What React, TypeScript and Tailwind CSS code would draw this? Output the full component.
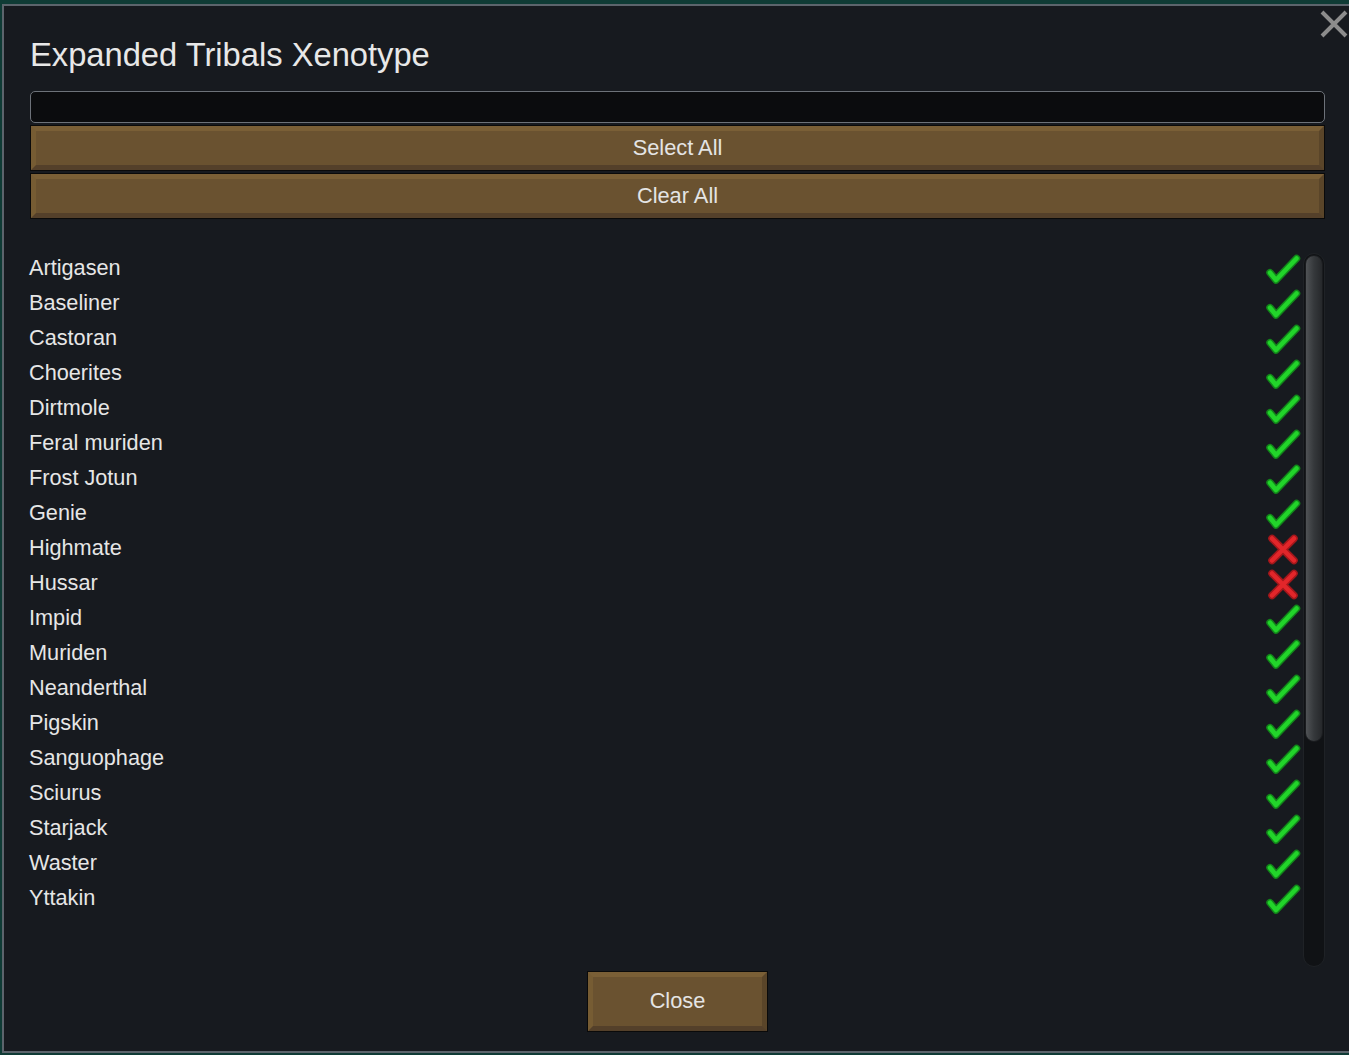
import React from "react";

type Xeno = { name: string; allowed: boolean };

const xenotypes: Xeno[] = [
  { name: "Artigasen", allowed: true },
  { name: "Baseliner", allowed: true },
  { name: "Castoran", allowed: true },
  { name: "Choerites", allowed: true },
  { name: "Dirtmole", allowed: true },
  { name: "Feral muriden", allowed: true },
  { name: "Frost Jotun", allowed: true },
  { name: "Genie", allowed: true },
  { name: "Highmate", allowed: false },
  { name: "Hussar", allowed: false },
  { name: "Impid", allowed: true },
  { name: "Muriden", allowed: true },
  { name: "Neanderthal", allowed: true },
  { name: "Pigskin", allowed: true },
  { name: "Sanguophage", allowed: true },
  { name: "Sciurus", allowed: true },
  { name: "Starjack", allowed: true },
  { name: "Waster", allowed: true },
  { name: "Yttakin", allowed: true },
];

const CheckIcon = () => (
  <svg width="36" height="32" viewBox="0 0 36 32">
    <path
      d="M5 19.7 L11 27 L31.5 5.5"
      fill="none"
      stroke="#12861a"
      strokeWidth="7.5"
      strokeLinecap="round"
      strokeLinejoin="round"
    />
    <path
      d="M5 19.7 L11 27 L31.5 5.5"
      fill="none"
      stroke="#22d42a"
      strokeWidth="4.5"
      strokeLinecap="round"
      strokeLinejoin="round"
    />
  </svg>
);

const CrossIcon = () => (
  <svg width="36" height="32" viewBox="0 0 36 32">
    <path
      d="M7 5.5 L29 27.5 M29 5.5 L7 27.5"
      fill="none"
      stroke="#a3171b"
      strokeWidth="7.5"
      strokeLinecap="round"
    />
    <path
      d="M7 5.5 L29 27.5 M29 5.5 L7 27.5"
      fill="none"
      stroke="#e2262a"
      strokeWidth="4.5"
      strokeLinecap="round"
    />
  </svg>
);

const WoodButton: React.FC<{ label: string; className?: string }> = ({
  label,
  className,
}) => (
  <button
    type="button"
    className={
      "border border-[#0a0a0a] bg-[#0a0a0a] p-0 " + (className ?? "")
    }
  >
    <div className="h-full w-full flex items-center justify-center bg-[#6a5230] border-[5px] border-t-[#7a5f36] border-l-[#765c33] border-b-[#54402a] border-r-[#5a4529] text-[21.8px] text-[#e4e4e4]">
      {label}
    </div>
  </button>
);

const App: React.FC = () => {
  return (
    <div
      className="w-[1349px] h-[1055px] overflow-hidden bg-[#0f3b35] pt-[4px] pl-[2px]"
      style={{ fontFamily: '"Liberation Sans", Arial, sans-serif' }}
    >
      <div className="relative w-[1350px] h-[1049px] border-2 border-[#5c646c] bg-[#171a1f] pl-[26px] pr-[25px] pt-[33px] flex flex-col">
        <button
          type="button"
          className="absolute top-[4px] right-[2px] w-[28px] h-[28px]"
        >
          <svg width="28" height="28" viewBox="0 0 28 28">
            <path
              d="M2 2 L26 26 M26 2 L2 26"
              stroke="#8c8c8c"
              strokeWidth="4"
              fill="none"
            />
          </svg>
        </button>

        <h1 className="text-[32.7px] leading-[32px] text-[#e8e8e8]">
          Expanded Tribals Xenotype
        </h1>

        <input
          type="text"
          className="mt-[20px] h-[32px] w-full rounded-[5px] border border-[#6d7279] bg-[#0b0c0e] outline-none px-2 text-[#ddd]"
        />

        <WoodButton label="Select All" className="mt-[2px] h-[46px] w-full" />
        <WoodButton label="Clear All" className="mt-[2px] h-[46px] w-full" />

        <div className="mt-[32px] h-[716px] flex">
          <div className="flex-1 flex flex-col">
            {xenotypes.map((x) => (
              <div
                key={x.name}
                className="h-[35px] flex items-center justify-between"
              >
                <span className="text-[21.7px] text-[#e6e6e6] -ml-[1px]">
                  {x.name}
                </span>
                {x.allowed ? <CheckIcon /> : <CrossIcon />}
              </div>
            ))}
          </div>
          <div className="ml-[2px] mt-[2px] w-[22px] h-[714px] rounded-full bg-[#101215] border border-[#1f2226] p-[1px]">
            <div className="h-[487px] w-full rounded-full border border-[#1a1c1f] bg-gradient-to-r from-[#505356] via-[#35383b] to-[#26282b]" />
          </div>
        </div>

        <div className="mt-[4px] flex justify-center">
          <WoodButton label="Close" className="w-[181px] h-[61px]" />
        </div>
      </div>
    </div>
  );
};

export default App;
